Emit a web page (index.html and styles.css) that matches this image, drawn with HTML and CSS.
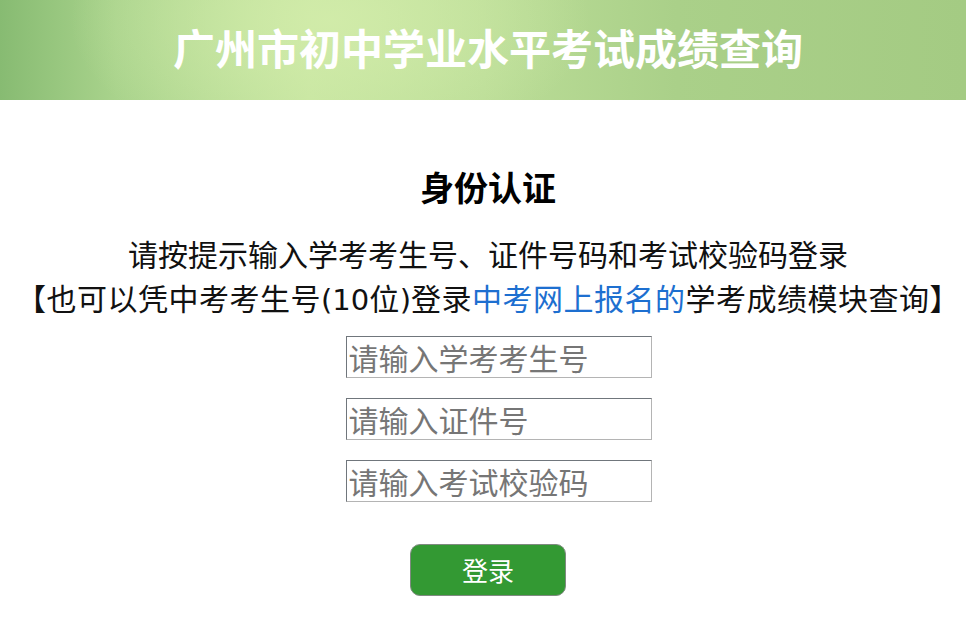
FILE: index.html
```html
<!DOCTYPE html>
<html lang="zh-CN">
<head>
<meta charset="utf-8">
<title>广州市初中学业水平考试成绩查询</title>
<link rel="stylesheet" href="styles.css">
</head>
<body>
<header class="banner">
  <h1 class="banner-title">广州市初中学业水平考试成绩查询</h1>
</header>
<main class="auth">
  <h2 class="auth-title">身份认证</h2>
  <div class="auth-tip">
    <p class="tip-line">请按提示输入学考考生号、证件号码和考试校验码登录</p>
    <p class="tip-line tip-line-wide">【也可以凭中考考生号<span class="num">(10</span>位<span class="num">)</span>登录<a class="tip-link" href="#">中考网上报名的</a>学考成绩模块查询】</p>
  </div>
  <form class="auth-form">
    <input class="field" type="text" placeholder="请输入学考考生号">
    <input class="field" type="text" placeholder="请输入证件号">
    <input class="field" type="text" placeholder="请输入考试校验码">
    <button class="login-btn" type="button">登录</button>
  </form>
</main>
</body>
</html>
```
FILE: styles.css
```css
html, body {
  margin: 0;
  padding: 0;
  background: #fff;
  font-family: "Liberation Sans", "Noto Sans CJK SC", sans-serif;
  color: #000;
}

.banner {
  height: 100px;
  display: flex;
  align-items: center;
  justify-content: center;
  padding-left: 10px;
  background:
    radial-gradient(ellipse 260px 140px at 330px 20px, rgba(210, 236, 170, 0.9), rgba(210, 236, 170, 0) 100%),
    linear-gradient(90deg, #87bb72 0%, #a9d38c 12%, #c6e5a0 32%, #bbdd97 50%, #aad089 70%, #a4cb83 100%);
}

.banner-title {
  margin: 0;
  font-family: "Noto Sans CJK SC", sans-serif;
  font-size: 42px;
  font-weight: 700;
  color: #fff;
  line-height: 1;
  transform: translateY(-3px);
}

.auth {
  display: flex;
  flex-direction: column;
  align-items: center;
  padding: 66px 0 0 10px;
}

.auth-title {
  margin: 0;
  font-family: "Noto Sans CJK SC", sans-serif;
  font-size: 34px;
  font-weight: 700;
  line-height: 42px;
}

.auth-tip {
  margin-top: 26px;
  display: flex;
  flex-direction: column;
  align-items: center;
  color: #111;
}

.tip-line {
  margin: 0;
  font-family: "Liberation Sans", "Noto Sans CJK SC", sans-serif;
  font-size: 30px;
  line-height: 44px;
  white-space: nowrap;
}

.tip-line-wide {
  letter-spacing: 0.5px;
}

.num {
  font-family: "DejaVu Sans", sans-serif;
  font-size: 29px;
  letter-spacing: 0;
}

.tip-link {
  color: #1d6fd0;
  text-decoration: none;
}

.auth-form {
  margin-top: 14px;
  display: flex;
  flex-direction: column;
  align-items: center;
  gap: 20px;
}

.field {
  box-sizing: border-box;
  width: 306px;
  height: 42px;
  margin-left: 21px;
  padding: 0 2px;
  border: 1px solid #b4b4b4;
  border-top-color: #70767c;
  border-left-color: #70767c;
  font-family: "Noto Sans CJK SC", sans-serif;
  font-size: 30px;
  color: #333;
  outline: none;
}

.field::placeholder {
  color: #767676;
}

.login-btn {
  box-sizing: border-box;
  margin-top: 22px;
  width: 156px;
  height: 52px;
  border: 1px solid #7f8a80;
  border-radius: 10px;
  background: #339933;
  color: #fff;
  font-family: "Noto Sans CJK SC", sans-serif;
  font-size: 26px;
  line-height: 1;
  padding: 0;
}
```
